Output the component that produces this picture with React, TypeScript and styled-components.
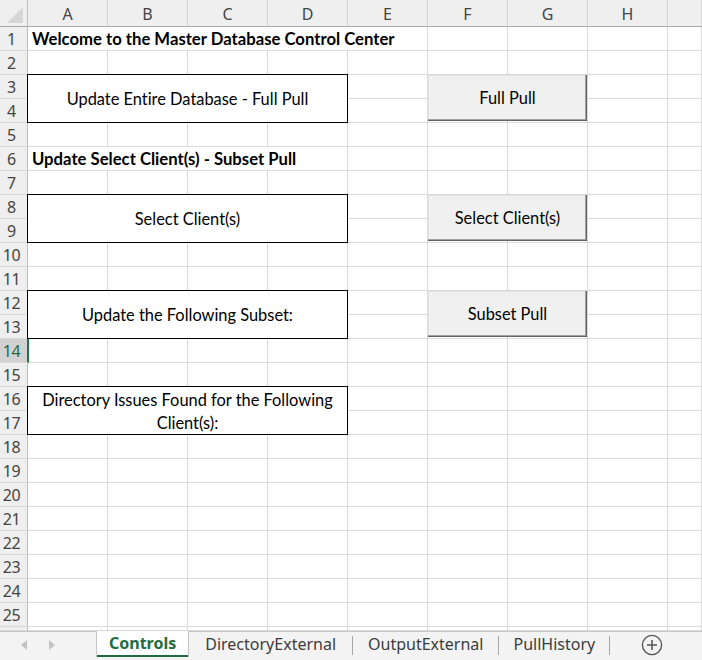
import React from "react";
import styled, { createGlobalStyle } from "styled-components";

const GlobalStyle = createGlobalStyle`
  html, body {
    margin: 0;
    padding: 0;
    background: #ffffff;
    overflow: hidden;
  }
`;

const COLUMNS = ["A", "B", "C", "D", "E", "F", "G", "H", ""];
const ROWS = Array.from({ length: 26 }, (_, i) => i + 1);
const SELECTED_ROW = 14;

const App = () => {
  return (
    <Ventana>
      <GlobalStyle />
      <Hoja>
        <Esquina>
          <svg width="18" height="18" viewBox="0 0 18 18">
            <polygon points="17,1 17,17 1,17" fill="#d6d6d6" />
          </svg>
        </Esquina>
        {COLUMNS.map((letra, i) => (
          <ColumnaCabecera key={letra + i} $col={i + 2}>
            {letra}
          </ColumnaCabecera>
        ))}
        {ROWS.map((fila) => (
          <React.Fragment key={fila}>
            <FilaCabecera $row={fila + 1} $activa={fila === SELECTED_ROW}>
              {fila < 26 ? fila : ""}
            </FilaCabecera>
            {COLUMNS.map((_, i) => (
              <Celda key={i} $row={fila + 1} $col={i + 2} />
            ))}
          </React.Fragment>
        ))}

        <Titulo $row={2} $span={5}>
          Welcome to the Master Database Control Center
        </Titulo>
        <Titulo $row={7} $span={4}>
          Update Select Client(s) - Subset Pull
        </Titulo>

        <Caja $row={4}>Update Entire Database - Full Pull</Caja>
        <Caja $row={9}>Select Client(s)</Caja>
        <Caja $row={13}>Update the Following Subset:</Caja>
        <Caja $row={17}>
          Directory Issues Found for the Following Client(s):
        </Caja>

        <Boton $row={4}>Full Pull</Boton>
        <Boton $row={9}>Select Client(s)</Boton>
        <Boton $row={13}>Subset Pull</Boton>
      </Hoja>

      <BarraPestanas>
        <Navegacion>
          <svg width="8" height="12" viewBox="0 0 8 12">
            <polygon points="7,1 7,11 1,6" fill="#c3c3c3" />
          </svg>
          <svg width="8" height="12" viewBox="0 0 8 12">
            <polygon points="1,1 1,11 7,6" fill="#c3c3c3" />
          </svg>
        </Navegacion>
        <Pestana $activa>Controls</Pestana>
        <Pestana>DirectoryExternal</Pestana>
        <Separador />
        <Pestana $pad={15}>OutputExternal</Pestana>
        <Separador />
        <Pestana $pad={14}>PullHistory</Pestana>
        <Separador />
        <Agregar>
          <svg width="22" height="22" viewBox="0 0 22 22">
            <circle cx="11" cy="11" r="9.6" fill="none" stroke="#5a5a5a" strokeWidth="1.4" />
            <line x1="6" y1="11" x2="16" y2="11" stroke="#5a5a5a" strokeWidth="1.6" />
            <line x1="11" y1="6" x2="11" y2="16" stroke="#5a5a5a" strokeWidth="1.6" />
          </svg>
        </Agregar>
      </BarraPestanas>
    </Ventana>
  );
};
export default App;

const Ventana = styled.div`
  width: 702px;
  height: 660px;
  display: flex;
  flex-direction: column;
  overflow: hidden;
  background: #ffffff;
`;

const Hoja = styled.div`
  display: grid;
  grid-template-columns: 28px repeat(8, 80px) 1fr;
  grid-template-rows: 27px repeat(25, 24px) 1fr;
  height: 631px;
  flex-shrink: 0;
  font-variant-ligatures: none;
`;

const Esquina = styled.div`
  grid-column: 1;
  grid-row: 1;
  background: #efefef;
  border-right: 1px solid #bdbdbd;
  border-bottom: 1px solid #a8a8a8;
  display: flex;
  align-items: flex-end;
  justify-content: flex-end;
  padding: 0 3px 2px 0;
  box-sizing: border-box;
`;

const ColumnaCabecera = styled.div<{ $col: number }>`
  grid-column: ${(p) => p.$col};
  grid-row: 1;
  background: #efefef;
  border-right: 1px solid #d8d8d8;
  border-bottom: 1px solid #a8a8a8;
  display: flex;
  align-items: center;
  justify-content: center;
  font-family: "Noto Sans", "Open Sans", sans-serif;
  font-size: 16px;
  color: #444444;
  padding-top: 1px;
`;

const FilaCabecera = styled.div<{ $row: number; $activa?: boolean }>`
  grid-column: 1;
  grid-row: ${(p) => p.$row};
  background: ${(p) => (p.$activa ? "#d2d2d2" : "#efefef")};
  border-right: ${(p) => (p.$activa ? "2px solid #217346" : "1px solid #bdbdbd")};
  margin-right: ${(p) => (p.$activa ? "-1px" : "0")};
  border-bottom: 1px solid #d8d8d8;
  display: flex;
  align-items: center;
  justify-content: center;
  padding: 1px 4px 0 0;
  font-family: "Noto Sans", "Open Sans", sans-serif;
  font-size: 16px;
  letter-spacing: -0.3px;
  color: ${(p) => (p.$activa ? "#1e6c41" : "#444444")};
  overflow: hidden;
  z-index: 1;
`;

const Celda = styled.div<{ $row: number; $col: number }>`
  grid-column: ${(p) => p.$col};
  grid-row: ${(p) => p.$row};
  border-right: 1px solid #dadada;
  border-bottom: 1px solid #dadada;
`;

const Titulo = styled.div<{ $row: number; $span: number }>`
  grid-column: 2 / span ${(p) => p.$span};
  grid-row: ${(p) => p.$row};
  margin: 0 1px 1px 0;
  background: #ffffff;
  z-index: 1;
  display: flex;
  align-items: center;
  padding: 1px 0 0 4px;
  font-family: "Lato", "Liberation Sans", sans-serif;
  font-weight: 700;
  font-size: 16.7px;
  color: #000000;
  white-space: nowrap;
`;

const Caja = styled.div<{ $row: number }>`
  grid-column: 2 / span 4;
  grid-row: ${(p) => p.$row} / span 2;
  margin: -1px 0 0 -1px;
  border: 1px solid #000000;
  background: #ffffff;
  z-index: 2;
  display: flex;
  align-items: center;
  justify-content: center;
  text-align: center;
  padding: 0 10px;
  font-family: "Lato", "Liberation Sans", sans-serif;
  font-size: 16.4px;
  line-height: 23px;
  color: #000000;
`;

const Boton = styled.div<{ $row: number }>`
  grid-column: 7 / span 2;
  grid-row: ${(p) => p.$row} / span 2;
  margin: 0 1px 2px 0;
  background: #f0f0f0;
  box-shadow: inset -1px -1px 0 #646464, inset -2px -2px 0 #a0a0a0,
    inset 1px 1px 0 #e3e3e3;
  z-index: 3;
  display: flex;
  align-items: center;
  justify-content: center;
  padding-bottom: 1px;
  font-family: "Lato", "Liberation Sans", sans-serif;
  font-size: 16.4px;
  color: #000000;
`;

const BarraPestanas = styled.div`
  flex: 1;
  display: flex;
  align-items: stretch;
  background: #f3f3f3;
  border-top: 1px solid #c6c6c6;
  font-family: "Noto Sans", "Open Sans", sans-serif;
  font-size: 16px;
`;

const Navegacion = styled.div`
  width: 96px;
  display: flex;
  align-items: center;
  gap: 20px;
  padding-left: 20px;
  box-sizing: border-box;
  padding-bottom: 2px;
`;

const Pestana = styled.div<{ $activa?: boolean; $pad?: number }>`
  display: flex;
  align-items: center;
  padding: 0 ${(p) => (p.$activa ? 12 : p.$pad ?? 16)}px 3px;
  margin-bottom: ${(p) => (p.$activa ? "3px" : "0")};
  background: ${(p) => (p.$activa ? "#ffffff" : "transparent")};
  border-left: ${(p) => (p.$activa ? "1px solid #c6c6c6" : "none")};
  border-right: ${(p) => (p.$activa ? "1px solid #c6c6c6" : "none")};
  box-shadow: ${(p) => (p.$activa ? "inset 0 -2px 0 #1e6c41" : "none")};
  margin-top: -1px;
  font-weight: ${(p) => (p.$activa ? 700 : 400)};
  color: ${(p) => (p.$activa ? "#1e6c41" : "#3c3c3c")};
  white-space: nowrap;
`;

const Separador = styled.div`
  width: 1px;
  background: #a6a6a6;
  margin: 4px 0 5px;
`;

const Agregar = styled.div`
  display: flex;
  align-items: center;
  padding: 0 0 2px 31px;
`;
